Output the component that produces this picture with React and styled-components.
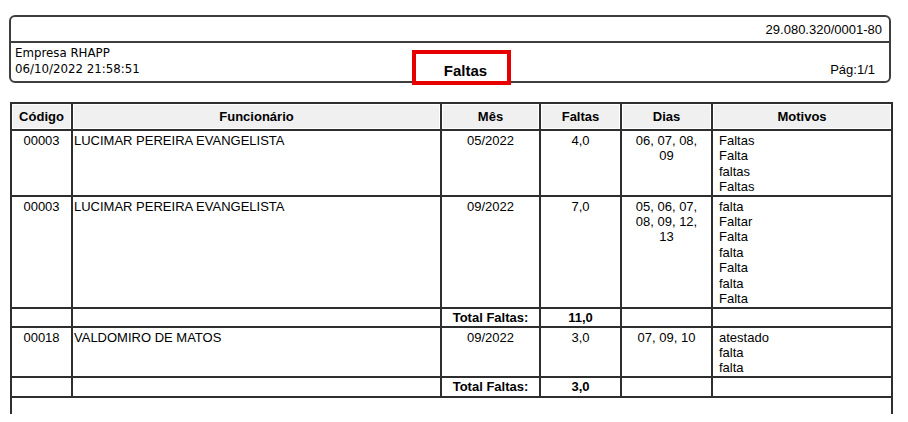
import React from 'react';
import styled, { createGlobalStyle } from 'styled-components';

const GlobalStyle = createGlobalStyle`
  html, body {
    margin: 0;
    padding: 0;
    background: #ffffff;
  }
  *, *::before, *::after {
    box-sizing: border-box;
  }
`;

const Page = styled.div`
  padding: 15px 0 0 9px;
  font-family: "Liberation Sans", Arial, sans-serif;
  color: #000;
`;

const HeaderBox = styled.div`
  width: 882px;
  height: 68px;
  border: 2px solid #3e3e3e;
  border-radius: 6px;
  display: flex;
  flex-direction: column;
`;

const TopBar = styled.div`
  height: 26px;
  border-bottom: 2px solid #3e3e3e;
  display: flex;
  align-items: center;
  justify-content: flex-end;
  padding-right: 7px;
  font-size: 13px;
`;

const BottomBar = styled.div`
  flex: 1;
  display: grid;
  grid-template-columns: 401px 99px 1fr;
`;

const CompanyInfo = styled.div`
  padding: 3px 0 0 4px;
  font-family: "DejaVu Sans", "Liberation Sans", sans-serif;
  font-size: 11.8px;
  line-height: 15.5px;
`;

const Title = styled.div`
  position: relative;
  padding: 19px 0 0 8px;
  text-align: center;
  font-size: 15px;
  font-weight: bold;
  line-height: 17px;

  &::after {
    content: '';
    position: absolute;
    left: 0;
    top: 7px;
    width: 99px;
    height: 35px;
    border: 4px solid #e60000;
  }
`;

const PageNumber = styled.div`
  padding: 19px 14px 0 0;
  text-align: right;
  font-size: 13px;
  line-height: 15px;
`;

const Report = styled.table`
  margin: 19px 0 0 1px;
  width: 883px;
  table-layout: fixed;
  border-collapse: separate;
  border-spacing: 0;
  border-left: 2px solid #2e2e2e;
  border-top: 2px solid #2e2e2e;
  font-size: 13px;
`;

const Head = styled.th`
  width: ${p => p.$w}px;
  height: 27px;
  padding: 0;
  border-right: 2px solid #2e2e2e;
  border-bottom: 2px solid #2e2e2e;
  background: #f0f0f0;
  box-shadow: inset 0 0 0 1px #ffffff;
  font-weight: bold;
  text-align: center;
  vertical-align: middle;
`;

const Row = styled.tr`
  height: ${p => p.$h}px;
`;

const Cell = styled.td`
  padding: 2px ${p => p.$px || 0}px 0 ${p => p.$pl ?? p.$px ?? 0}px;
  border-right: 2px solid #2e2e2e;
  border-bottom: 2px solid #2e2e2e;
  text-align: ${p => p.$align || 'center'};
  vertical-align: top;
  line-height: 15.4px;
  overflow: hidden;
`;

const TotalCell = styled(Cell)`
  padding: 0;
  vertical-align: middle;
  font-weight: bold;
  line-height: 15px;
`;

const Spacer = styled.td`
  height: 16px;
  padding: 0;
  border-right: 2px solid #2e2e2e;
`;

const Line = styled.div`
  white-space: nowrap;
`;

const columns = [
  { label: 'Código', w: 61 },
  { label: 'Funcionário', w: 369 },
  { label: 'Mês', w: 99 },
  { label: 'Faltas', w: 81 },
  { label: 'Dias', w: 91 },
  { label: 'Motivos', w: 180 },
];

const groups = [
  {
    total: '11,0',
    items: [
      {
        code: '00003',
        name: 'LUCIMAR PEREIRA EVANGELISTA',
        month: '05/2022',
        count: '4,0',
        days: '06, 07, 08, 09',
        reasons: ['Faltas', 'Falta', 'faltas', 'Faltas'],
        h: 65,
      },
      {
        code: '00003',
        name: 'LUCIMAR PEREIRA EVANGELISTA',
        month: '09/2022',
        count: '7,0',
        days: '05, 06, 07, 08, 09, 12, 13',
        reasons: ['falta', 'Faltar', 'Falta', 'falta', 'Falta', 'falta', 'Falta'],
        h: 112,
      },
    ],
    totalH: 19,
  },
  {
    total: '3,0',
    items: [
      {
        code: '00018',
        name: 'VALDOMIRO DE MATOS',
        month: '09/2022',
        count: '3,0',
        days: '07, 09, 10',
        reasons: ['atestado', 'falta', 'falta'],
        h: 50,
      },
    ],
    totalH: 20,
  },
];

export default function App() {
  return (
    <>
      <GlobalStyle />
      <Page>
        <HeaderBox>
          <TopBar>29.080.320/0001-80</TopBar>
          <BottomBar>
            <CompanyInfo>
              <div>Empresa RHAPP</div>
              <div>06/10/2022 21:58:51</div>
            </CompanyInfo>
            <Title>Faltas</Title>
            <PageNumber>Pág:1/1</PageNumber>
          </BottomBar>
        </HeaderBox>

        <Report>
          <thead>
            <tr>
              {columns.map(c => (
                <Head key={c.label} $w={c.w}>{c.label}</Head>
              ))}
            </tr>
          </thead>
          <tbody>
            {groups.map((g, gi) => (
              <React.Fragment key={gi}>
                {g.items.map((it, i) => (
                  <Row key={i} $h={it.h}>
                    <Cell>{it.code}</Cell>
                    <Cell $align="left" $pl={1}>{it.name}</Cell>
                    <Cell>{it.month}</Cell>
                    <Cell>{it.count}</Cell>
                    <Cell $px={8}>{it.days}</Cell>
                    <Cell $align="left" $pl={6}>
                      {it.reasons.map((r, ri) => (
                        <Line key={ri}>{r}</Line>
                      ))}
                    </Cell>
                  </Row>
                ))}
                <Row $h={g.totalH}>
                  <TotalCell />
                  <TotalCell />
                  <TotalCell>Total Faltas:</TotalCell>
                  <TotalCell>{g.total}</TotalCell>
                  <TotalCell />
                  <TotalCell />
                </Row>
              </React.Fragment>
            ))}
            <tr>
              <Spacer colSpan={6} />
            </tr>
          </tbody>
        </Report>
      </Page>
    </>
  );
}
